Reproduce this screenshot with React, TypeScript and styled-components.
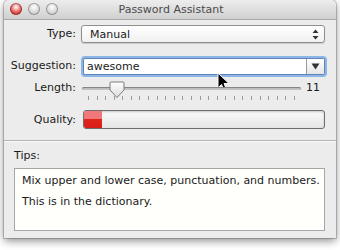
import styled, { createGlobalStyle } from "styled-components";

const GlobalStyle = createGlobalStyle`
  html, body {
    margin: 0;
    background: #ffffff;
  }
  body {
    font-family: "DejaVu Sans", "Liberation Sans", sans-serif;
    font-size: 11px;
    color: #1a1a1a;
  }
`;

const TICKS = 25;

export default function App() {
  return (
    <>
      <GlobalStyle />
      <Page>
        <Window>
          <TitleBar>
            <Lights>
              <Light $color="#e0443e" />
              <Light $color="#d2d2d2" />
              <Light $color="#d2d2d2" />
            </Lights>
            <Title>Password Assistant</Title>
          </TitleBar>

          <Form>
            <Row $top={5} $height={18}>
              <Label>Type:</Label>
              <Popup>
                <span>Manual</span>
                <svg width="7" height="11" viewBox="0 0 7 11">
                  <path d="M3.5 0.5 L6.5 4 L0.5 4 Z" fill="#333" />
                  <path d="M3.5 10.5 L6.5 7 L0.5 7 Z" fill="#333" />
                </svg>
              </Popup>
            </Row>

            <Row $top={13} $height={20}>
              <Label>Suggestion:</Label>
              <Combo>
                <ComboInput>awesome</ComboInput>
                <ComboButton>
                  <svg width="9" height="7" viewBox="0 0 9 7">
                    <path d="M0.5 0.5 L8.5 0.5 L4.5 6.5 Z" fill="#333" />
                  </svg>
                </ComboButton>
                <Cursor width="14" height="20" viewBox="0 0 14 20">
                  <path
                    d="M1 1 L1 16 L4.5 12.5 L7.2 18.5 L9.6 17.4 L7 11.6 L12 11.6 Z"
                    fill="#000"
                    stroke="#fff"
                    strokeWidth="1"
                  />
                </Cursor>
              </Combo>
            </Row>

            <Row $top={4} $height={22} $alignTop>
              <Label>Length:</Label>
              <Slider>
                <Track />
                <Knob width="16" height="18" viewBox="0 0 16 18">
                  <defs>
                    <linearGradient id="kg" x1="0" y1="0" x2="0" y2="1">
                      <stop offset="0" stopColor="#ffffff" />
                      <stop offset="1" stopColor="#dcdcdc" />
                    </linearGradient>
                  </defs>
                  <path
                    d="M2 1 H14 Q15 1 15 2 V9 L8 16.5 L1 9 V2 Q1 1 2 1 Z"
                    fill="url(#kg)"
                    stroke="#7a7a7a"
                  />
                </Knob>
                <Ticks>
                  {Array.from({ length: TICKS }).map((_, i) => (
                    <Tick key={i} />
                  ))}
                </Ticks>
              </Slider>
              <Value>11</Value>
            </Row>

            <Row $top={8} $height={19}>
              <Label>Quality:</Label>
              <Meter>
                <MeterFill style={{ width: "7.5%" }} />
              </Meter>
            </Row>
          </Form>

          <Separator />

          <TipsSection>
            <TipsLabel>Tips:</TipsLabel>
            <TipsBox>
              <p>Mix upper and lower case, punctuation, and numbers.</p>
              <p>This is in the dictionary.</p>
            </TipsBox>
          </TipsSection>
        </Window>
      </Page>
    </>
  );
}

const Page = styled.div`
  width: 340px;
  height: 250px;
  padding: 0 4px;
  box-sizing: border-box;
`;

const Window = styled.div`
  width: 332px;
  height: 238px;
  background: #ececec;
  border-radius: 5px 5px 0 0;
  box-shadow: 0 3px 8px rgba(0, 0, 0, 0.45), 0 0 0 1px rgba(0, 0, 0, 0.18);
  overflow: hidden;
  display: flex;
  flex-direction: column;
`;

const TitleBar = styled.div`
  height: 20px;
  flex: none;
  box-sizing: border-box;
  position: relative;
  display: flex;
  align-items: center;
  justify-content: center;
  background: linear-gradient(#ededed, #d0d0d0);
  border-bottom: 1px solid #a8a8a8;
`;

const Lights = styled.div`
  position: absolute;
  left: 6px;
  top: 3px;
  display: flex;
  gap: 6px;
`;

const Light = styled.div<{ $color: string }>`
  width: 12px;
  height: 12px;
  border-radius: 50%;
  background: radial-gradient(circle at 50% 35%, #fff 0, ${(p) => p.$color} 60%);
  box-shadow: inset 0 0 0 1px rgba(0, 0, 0, 0.3);
`;

const Title = styled.div`
  font-size: 11px;
  color: #4a4a4a;
  margin-left: 2px;
`;

const Form = styled.div`
  display: flex;
  flex-direction: column;
  padding-right: 11px;
`;

const Row = styled.div<{ $top: number; $height: number; $alignTop?: boolean }>`
  display: flex;
  align-items: ${(p) => (p.$alignTop ? "flex-start" : "center")};
  gap: 5px;
  margin-top: ${(p) => p.$top}px;
  height: ${(p) => p.$height}px;
`;

const Label = styled.div`
  width: 72px;
  flex: none;
  text-align: right;
  line-height: 16px;
`;

const Popup = styled.div`
  flex: 1;
  height: 16px;
  border: 1px solid #8e8e8e;
  border-radius: 3px;
  background: linear-gradient(#ffffff, #f1f1f1);
  box-shadow: 0 1px 1px rgba(0, 0, 0, 0.15);
  display: flex;
  align-items: center;
  justify-content: space-between;
  padding: 0 5px 0 8px;
`;

const Combo = styled.div`
  flex: 1;
  position: relative;
  height: 15px;
  display: flex;
  border: 1px solid #5f86b8;
  border-radius: 2px;
  box-shadow: 0 0 0 2px #8db5e8;
  background: #fff;
  margin: 0 0 0 2px;
`;

const ComboInput = styled.div`
  flex: 1;
  padding-left: 3px;
  line-height: 15px;
`;

const ComboButton = styled.div`
  width: 17px;
  border-left: 1px solid #9a9a9a;
  background: linear-gradient(#ffffff, #e6e6e6);
  display: flex;
  align-items: center;
  justify-content: center;
`;

const Cursor = styled.svg`
  position: absolute;
  left: 133px;
  top: 13px;
`;

const Slider = styled.div`
  position: relative;
  width: 219px;
  height: 22px;
  flex: none;
  margin-left: 1px;
`;

const Track = styled.div`
  position: absolute;
  left: 0;
  right: 0;
  top: 7px;
  height: 3px;
  border-radius: 2px;
  background: #c4c4c4;
  box-shadow: inset 0 1px 1px rgba(0, 0, 0, 0.35);
`;

const Knob = styled.svg`
  position: absolute;
  left: 27px;
  top: 1px;
`;

const Ticks = styled.div`
  position: absolute;
  left: 6px;
  right: 6px;
  top: 16px;
  display: flex;
  justify-content: space-between;
`;

const Tick = styled.div`
  width: 1px;
  height: 4px;
  background: #9a9a9a;
`;

const Value = styled.div`
  flex: 1;
  text-align: right;
  padding-right: 6px;
  line-height: 16px;
`;

const Meter = styled.div`
  flex: 1;
  height: 17px;
  margin-left: 2px;
  border: 1px solid #6e6e6e;
  border-radius: 3px;
  background: linear-gradient(#f9f9f9, #e6e6e6);
  box-shadow: inset 0 1px 2px rgba(0, 0, 0, 0.2);
  overflow: hidden;
  display: flex;
`;

const MeterFill = styled.div`
  height: 100%;
  background: linear-gradient(#f0787a 0, #f0787a 45%, #e0241c 50%, #d91e18 100%);
`;

const Separator = styled.div`
  margin-top: 11px;
  height: 1px;
  background: #b4b4b4;
  border-bottom: 1px solid #f8f8f8;
`;

const TipsSection = styled.div`
  padding: 6px 11px 0 10px;
`;

const TipsLabel = styled.div`
  line-height: 16px;
`;

const TipsBox = styled.div`
  margin-top: 4px;
  height: 63px;
  background: #fffffc;
  border: 1px solid #a6a6a6;
  padding: 4px 7px;
  box-sizing: border-box;

  p {
    margin: 0 0 6px 0;
    line-height: 15px;
    white-space: nowrap;
  }
`;
